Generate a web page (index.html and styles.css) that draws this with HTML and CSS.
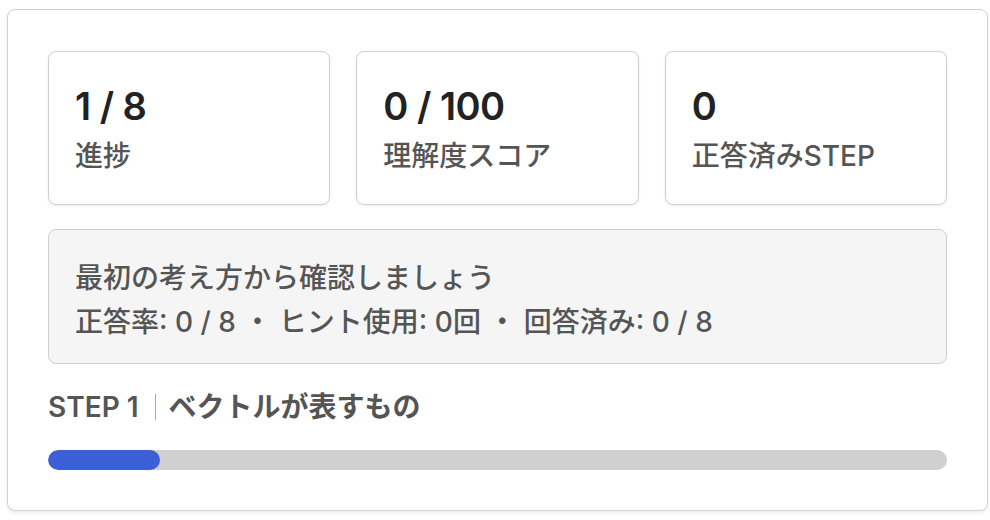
FILE: index.html
```html
<!DOCTYPE html>
<html lang="ja">
<head>
  <meta charset="UTF-8">
  <title>ベクトル学習</title>
  <link rel="stylesheet" href="styles.css">
</head>
<body>
  <div class="panel">
    <div class="stats">
      <div class="stat">
        <div class="stat-value">1 / 8</div>
        <div class="stat-label">進捗</div>
      </div>
      <div class="stat">
        <div class="stat-value">0 / 100</div>
        <div class="stat-label">理解度スコア</div>
      </div>
      <div class="stat">
        <div class="stat-value">0</div>
        <div class="stat-label">正答済みSTEP</div>
      </div>
    </div>

    <div class="summary">
      <div class="summary-title">最初の考え方から確認しましょう</div>
      <div class="summary-meta">正答率: 0 / 8 ・ ヒント使用: 0回 ・ 回答済み: 0 / 8</div>
    </div>

    <div class="step-title">
      <span>STEP 1</span><span class="sep"></span><span>ベクトルが表すもの</span>
    </div>

    <div class="progress">
      <div class="progress-fill" style="width:12.5%;"></div>
    </div>
  </div>
</body>
</html>
```

FILE: styles.css
```css
html, body {
  margin:0;
  padding:0;
  background:#fff;
  font-family:Inter, "Noto Sans CJK JP", sans-serif;
  color:#222;
}
.panel {
  margin:9px 2px 8px 7px;
  border:1px solid #d2d2d2;
  border-radius:8px;
  box-shadow:0 2px 4px rgba(0,0,0,0.08);
  padding:41px 40px 40px 40px;
  background:#fff;
}
.stats {
  display:grid;
  grid-template-columns:repeat(3,1fr);
  gap:26px;
}
.stat {
  height:154px;
  box-sizing:border-box;
  border:1px solid #cfcfcf;
  border-radius:8px;
  box-shadow:0 1px 3px rgba(0,0,0,0.08);
  padding:28px 26px 0;
}
.stat-value {
  font-size:38px;
  font-weight:600;
  line-height:52px;
  letter-spacing:-0.5px;
  color:#222;
}
.stat-label {
  font-size:28px;
  font-weight:500;
  line-height:36px;
  color:#555;
  margin-top:6px;
}
.summary {
  margin-top:24px;
  height:135px;
  box-sizing:border-box;
  background:#f5f5f5;
  border:1px solid #cfcfcf;
  border-radius:8px;
  padding:26px 26px;
  font-size:28px;
  font-weight:500;
  color:#555;
  line-height:44px;
}
.step-title {
  margin-top:25px;
  display:flex;
  align-items:center;
  font-size:28px;
  font-weight:600;
  color:#555;
  line-height:36px;
}
.sep {
  width:1px;
  height:26px;
  background:#aaa;
  margin:0 13px 0 16px;
}
.progress {
  margin-top:25px;
  height:20px;
  border-radius:10px;
  background:#d0d0d0;
  overflow:hidden;
}
.progress-fill {
  height:100%;
  background:#3b5fd6;
  border-radius:10px;
}
```
